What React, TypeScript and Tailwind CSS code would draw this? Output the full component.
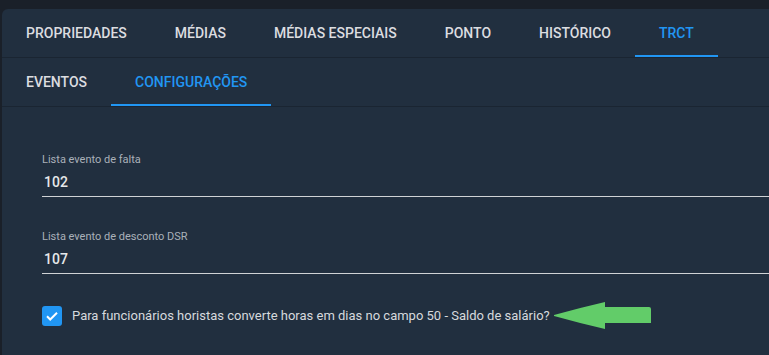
import React from "react";

const TOP_TABS = ["Propriedades", "Médias", "Médias Especiais", "Ponto", "Histórico", "TRCT"];
const SUB_TABS = ["Eventos", "Configurações"];

function TabRow({ tabs, active }: { tabs: string[]; active: number }) {
  return (
    <div className="flex h-[49px] border-b border-[#1a2532]">
      {tabs.map((tab, i) => (
        <div
          key={tab}
          className={
            i === active
              ? "relative flex items-center px-6 text-[14px] font-medium uppercase text-[#2196f3]"
              : "relative flex items-center px-6 text-[14px] font-medium uppercase text-[#dcdde0]"
          }
        >
          {tab}
          {i === active && <div className="absolute bottom-0 left-0 right-0 h-[2px] bg-[#2196f3]" />}
        </div>
      ))}
    </div>
  );
}

function Field({ label, value, className }: { label: string; value: string; className?: string }) {
  return (
    <div className={className}>
      <div className="text-[11px] leading-[14px] text-[#aab1b9]">{label}</div>
      <div className="mt-[5px] pb-[4px] pl-[2px] text-[14px] leading-[20px] font-medium text-[#e6e8ea] border-b border-[#cfd2d5]">
        {value}
      </div>
    </div>
  );
}

export default function App() {
  return (
    <div className="w-[769px] h-[355px] overflow-hidden bg-[#1a2029] pt-[9px] pl-[2px] font-['Roboto',sans-serif]">
      <div className="h-full bg-[#212f3f] rounded-tl-[6px]">
        <TabRow tabs={TOP_TABS} active={5} />
        <TabRow tabs={SUB_TABS} active={1} />

        <div className="pl-[40px] pt-[46px]">
          <Field label="Lista evento de falta" value="102" />
          <Field label="Lista evento de desconto DSR" value="107" className="mt-[33px]" />

          <div className="mt-[28px] flex items-center">
            <div className="flex h-[20px] w-[20px] items-center justify-center rounded-[3px] bg-[#2196f3]">
              <svg width="14" height="14" viewBox="0 0 14 14" fill="none">
                <path d="M2 7.3l3.2 3.2L12 3.8" stroke="white" strokeWidth="2" />
              </svg>
            </div>
            <span className="ml-[10px] text-[13px] text-[#d6d9dd]">
              Para funcionários horistas converte horas em dias no campo 50 - Saldo de salário?
            </span>
            <svg className="ml-[4px]" width="98" height="28" viewBox="0 0 98 28">
              <path
                d="M0 13 Q25 6 51 0 L51 5 L95 5 Q97 5 97 7 L97 21 L51 21 L51 27 Q25 21 0 14 Z"
                fill="#62cc69"
              />
            </svg>
          </div>
        </div>
      </div>
    </div>
  );
}
